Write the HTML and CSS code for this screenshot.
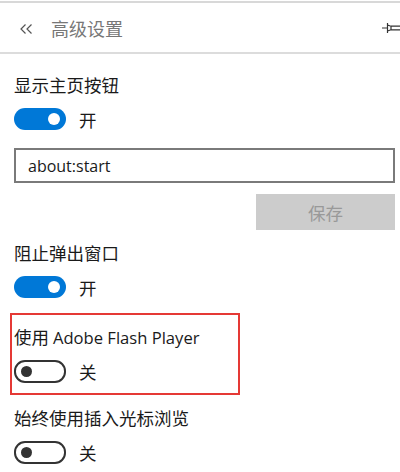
FILE: index.html
```html
<!DOCTYPE html>
<html lang="zh-CN">
<head>
<meta charset="utf-8">
<title>高级设置</title>
<link rel="stylesheet" href="styles.css">
</head>
<body>
<div class="topline"></div>
<header class="header">
  <svg class="back" width="13" height="10" viewBox="0 0 13 10"><polyline points="5.5,0.5 1,5 5.5,9.5" fill="none" stroke="#555" stroke-width="1.2"/><polyline points="11.5,0.5 7,5 11.5,9.5" fill="none" stroke="#555" stroke-width="1.2"/></svg>
  <span class="title">高级设置</span>
  <svg class="pin" width="18" height="12" viewBox="0 0 18 12"><path d="M0 6 H5 M5.5 1 V11 M5.5 3 L9 4.2 H18 M5.5 9 L9 7.8 H18 M9 4.2 V7.8" fill="none" stroke="#333" stroke-width="1.2"/></svg>
</header>
<main class="content">
  <div class="label">显示主页按钮</div>
  <div class="toggle-row"><span class="toggle on"><span class="knob"></span></span><span class="state">开</span></div>
  <div class="input">about:start</div>
  <div class="btn-row"><span class="btn">保存</span></div>
  <div class="label gap-s">阻止弹出窗口</div>
  <div class="toggle-row"><span class="toggle on"><span class="knob"></span></span><span class="state">开</span></div>
  <div class="highlight">
    <div class="label flat">使用 <span class="latin">Adobe Flash Player</span></div>
    <div class="toggle-row"><span class="toggle off"><span class="knob"></span></span><span class="state">关</span></div>
  </div>
  <div class="label gap-s">始终使用插入光标浏览</div>
  <div class="toggle-row"><span class="toggle off"><span class="knob"></span></span><span class="state">关</span></div>
</main>
</body>
</html>
```
FILE: styles.css
```css
html, body {
  margin: 0;
  padding: 0;
  background: #fff;
}
body {
  width: 400px;
  height: 472px;
  overflow: hidden;
  font-family: "Open Sans", "Noto Sans CJK SC", sans-serif;
  color: #1a1a1a;
}
.topline {
  margin-top: 1px;
  height: 2px;
  background: #d8d8d8;
}
.header {
  height: 49px;
  border-bottom: 2px solid #dcdcdc;
  display: flex;
  align-items: center;
  padding-left: 20px;
}
.back {
  display: block;
  margin-top: 2px;
}
.title {
  margin-left: 18px;
  font-size: 18px;
  color: #777;
  font-family: "Noto Sans CJK SC", sans-serif;
}
.pin {
  display: block;
  margin-left: auto;
  margin-right: 0;
}
.content {
  padding: 19px 5px 0 14px;
  display: flex;
  flex-direction: column;
}
.label {
  height: 24px;
  line-height: 24px;
  font-size: 17.5px;
  white-space: nowrap;
  font-family: "Noto Sans CJK SC", sans-serif;
}
.latin {
  font-family: "Open Sans", sans-serif;
  font-size: 16.6px;
}
.gap-s {
  margin-top: 11px;
}
.toggle-row {
  margin-top: 10px;
  height: 24px;
  display: flex;
  align-items: center;
}
.toggle {
  box-sizing: border-box;
  width: 52px;
  height: 22px;
  border-radius: 11px;
  display: flex;
  align-items: center;
}
.toggle.on {
  background: #0078d7;
  justify-content: flex-end;
  padding-right: 6px;
}
.toggle.on .knob {
  width: 12px;
  height: 12px;
  border-radius: 50%;
  background: #fff;
}
.toggle.off {
  border: 2px solid #333;
  height: 23px;
  padding-left: 5px;
}
.toggle.off .knob {
  width: 11px;
  height: 11px;
  border-radius: 50%;
  background: #333;
}
.state {
  margin-left: 13px;
  font-size: 17.5px;
  font-family: "Noto Sans CJK SC", sans-serif;
}
.input {
  margin-top: 17px;
  box-sizing: border-box;
  height: 35px;
  border: 2px solid #7a7a7a;
  padding-left: 12px;
  display: flex;
  align-items: center;
  font-size: 16px;
  color: #1a1a1a;
}
.btn-row {
  margin-top: 11px;
  display: flex;
  justify-content: flex-end;
}
.btn {
  width: 139px;
  height: 36px;
  background: #cccccc;
  color: #999;
  font-size: 17.5px;
  display: flex;
  align-items: center;
  justify-content: center;
  font-family: "Noto Sans CJK SC", sans-serif;
}
.highlight {
  margin-top: 14px;
  margin-left: -4px;
  box-sizing: border-box;
  width: 230px;
  border: 2px solid #e53935;
  padding: 10px 0 10px 2px;
}
.flat {
  margin-top: 0;
}
```
